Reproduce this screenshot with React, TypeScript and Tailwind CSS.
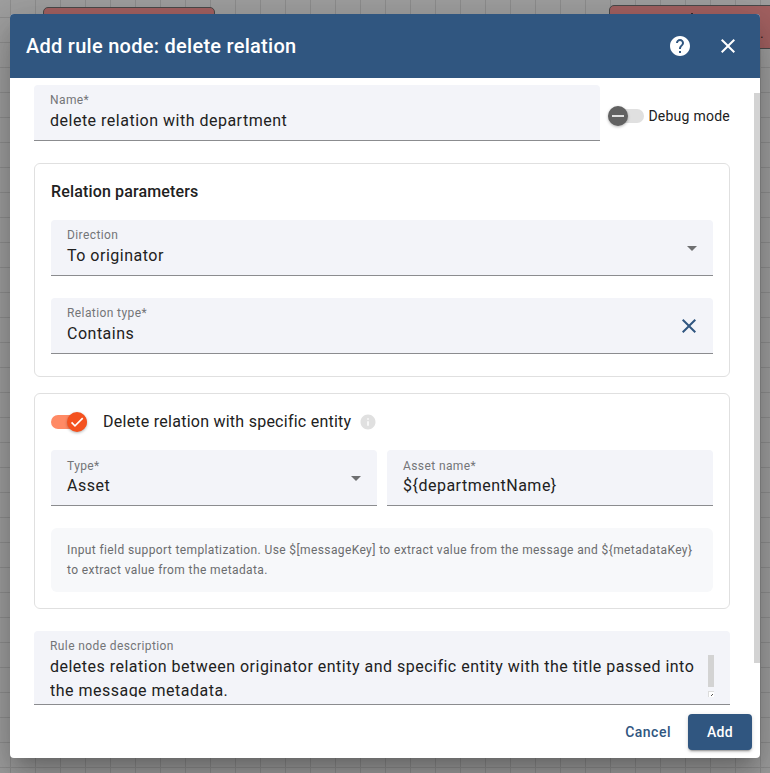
import type { ReactNode } from "react";

function Cross({ className }: { className: string }) {
  return (
    <svg viewBox="0 0 24 24" className={className} fill="currentColor">
      <path d="M19 6.41 17.59 5 12 10.59 6.41 5 5 6.41 10.59 12 5 17.59 6.41 19 12 13.41 17.59 19 19 17.59 13.41 12z" />
    </svg>
  );
}

function Caret() {
  return (
    <svg viewBox="0 0 10 5" className="h-[5px] w-[10px] text-[#6e6f71]" fill="currentColor">
      <path d="M0 0h10L5 5z" />
    </svg>
  );
}

interface FieldProps {
  label: string;
  value: string;
  children?: ReactNode;
  className?: string;
  labelClass?: string;
}

function Field({ label, value, children, className = "", labelClass = "pt-[7px] mb-px" }: FieldProps) {
  return (
    <div className={`flex h-14 justify-between rounded-t border-b border-[#8b8c8f] bg-[#f3f4f9] px-4 ${className}`}>
      <div>
        <div className={`text-xs leading-4 tracking-[0.4px] text-[#747578] ${labelClass}`}>{label}</div>
        <div className="text-base leading-6 tracking-[0.5px] text-[#212121]">{value}</div>
      </div>
      {children}
    </div>
  );
}

export default function App() {
  return (
    <div className="relative h-[773px] w-[770px] overflow-hidden bg-[#9f9f9f] bg-[linear-gradient(to_right,#8e8e8e_1px,transparent_1px),linear-gradient(to_bottom,#8e8e8e_1px,transparent_1px)] bg-[size:25px_25px] bg-[position:10px_17px] font-['Roboto',sans-serif]">
      <div className="absolute left-[43px] top-[7px] h-[42px] w-[172px] rounded-[5px] border border-[#4a4a4a] bg-[#a36161]" />
      <div className="absolute left-[609px] top-[5px] h-[44px] w-[172px] rounded-[5px] border border-[#4a4a4a] bg-[#a36161]">
        <span className="absolute left-[81px] top-[7px] h-1 w-[2px] bg-[#3b2929]" />
        <span className="absolute left-[144px] top-[20px] text-xs text-[#231515]">...</span>
      </div>

      <div className="absolute left-[10px] top-[14px] flex h-[744px] w-[750px] flex-col overflow-hidden rounded bg-white shadow-[0_11px_15px_-7px_rgba(0,0,0,0.2),0_24px_38px_3px_rgba(0,0,0,0.14),0_9px_46px_8px_rgba(0,0,0,0.12)]">
        <header className="flex h-16 shrink-0 items-center bg-[#305680] pl-4 pr-5 text-white">
          <h1 className="flex-1 text-xl font-medium tracking-[0.27px]">Add rule node: delete relation</h1>
          <svg viewBox="0 0 24 24" className="mr-6 h-6 w-6" fill="currentColor">
            <path d="M12 2C6.48 2 2 6.48 2 12s4.480 10 10 10 10-4.480 10-10S17.520 2 12 2zm1 17h-2v-2h2v2zm2.070-7.750-.9.920C13.450 12.900 13 13.500 13 15h-2v-.5c0-1.100.45-2.100 1.170-2.830l1.240-1.260c.370-.360.590-.860.590-1.410 0-1.100-.9-2-2-2s-2 .9-2 2H8c0-2.210 1.790-4 4-4s4 1.790 4 4c0 .880-.360 1.680-.930 2.250z" />
          </svg>
          <Cross className="h-6 w-6" />
        </header>

        <main className="flex h-[627px] shrink-0">
          <div className="w-[744px] pl-6 pr-6 pt-[7px]">
            <div className="flex">
              <Field label="Name*" value="delete relation with department" className="w-[566px]" />
              <div className="ml-2 flex h-[62px] items-center">
                <div className="relative h-[14px] w-9 rounded-full bg-[#e0e0e0]">
                  <span className="absolute -top-[3px] left-0 flex h-5 w-5 items-center justify-center rounded-full bg-[#616161] shadow-[0_1px_3px_rgba(0,0,0,0.3)]">
                    <span className="h-[2px] w-3 bg-[#e0e0e0]" />
                  </span>
                </div>
                <span className="ml-[4.5px] whitespace-nowrap text-sm leading-5 tracking-[0.25px] text-[#212121]">Debug mode</span>
              </div>
            </div>

            <section className="mt-4 h-[214px] w-[696px] rounded-md border border-[#e0e0e0] px-4">
              <h2 className="mt-4 text-base font-medium leading-6 tracking-[0.15px] text-[#212121]">Relation parameters</h2>
              <Field label="Direction" value="To originator" className="mt-4">
                <div className="flex pt-[26px]"><Caret /></div>
              </Field>
              <Field label="Relation type*" value="Contains" className="mt-[22px]">
                <Cross className="-mr-1 mt-4 h-6 w-6 text-[#305680]" />
              </Field>
            </section>

            <section className="mt-4 h-[216px] w-[696px] rounded-md border border-[#e0e0e0] px-4">
              <div className="mt-4 flex h-6 items-center">
                <div className="relative h-[14px] w-9 rounded-full bg-[#ff8a65]">
                  <span className="absolute -top-[3px] right-0 flex h-5 w-5 items-center justify-center rounded-full bg-[#f4511e] shadow-[0_1px_3px_rgba(0,0,0,0.3)]">
                    <svg viewBox="0 0 24 24" className="h-4 w-4" fill="white">
                      <path d="M19.690 5.230 8.960 15.960l-4.230-4.230L2.960 13.500l6 6L21.460 7z" />
                    </svg>
                  </span>
                </div>
                <span className="ml-4 text-base leading-6 tracking-[0.25px] text-[#212121]">Delete relation with specific entity</span>
                <svg viewBox="0 0 24 24" className="ml-2 h-[18px] w-[18px] text-[#e0e0e0]" fill="currentColor">
                  <path d="M12 2C6.480 2 2 6.480 2 12s4.480 10 10 10 10-4.480 10-10S17.520 2 12 2zm1 15h-2v-6h2v6zm0-8h-2V7h2v2z" />
                </svg>
              </div>
              <div className="mt-4 flex gap-[10px]">
                <Field label="Type*" value="Asset" className="flex-1" labelClass="pt-2">
                  <div className="flex pt-[26px]"><Caret /></div>
                </Field>
                <Field label="Asset name*" value="${departmentName}" className="flex-1" labelClass="pt-2" />
              </div>
              <p className="mt-[22px] h-16 rounded-md bg-[#f7f8fa] px-4 py-3 text-xs leading-5 tracking-[0.39px] text-[#6b6c6e]">
                Input field support templatization. Use $[messageKey] to extract value from the message and ${"{metadataKey}"} to extract value from the metadata.
              </p>
            </section>

            <div className="mt-[22px] h-[74px] w-[696px] rounded-t border-b border-[#8b8c8f] bg-[#f3f4f9] px-4 pt-[7px]">
              <div className="text-xs leading-4 tracking-[0.4px] text-[#747578]">Rule node description</div>
              <div className="flex h-[43px] justify-between overflow-hidden">
                <p className="w-[650px] shrink-0 pt-px text-base leading-6 tracking-[0.49px] text-[#212121]">
                  deletes relation between originator entity and specific entity with the title passed into the message metadata.
                </p>
                <div className="flex w-[6px] shrink-0 flex-col justify-between pt-px">
                  <span className="h-8 bg-[#d3d3d3]" />
                  <svg viewBox="0 0 6 6" className="h-[6px] w-[6px]">
                    <path d="M0 0h6v6H0z" fill="#dcdcdc" />
                    <path d="M1 1h5v5H1z" fill="white" />
                    <path d="M4 3h1v1H4zM3 4h1v1H3z" fill="#555" />
                  </svg>
                </div>
              </div>
            </div>
          </div>
          <div className="mt-[15px] h-[570px] w-[6px] bg-[#d3d3d3]" />
        </main>

        <footer className="flex flex-1 items-start justify-end pr-2 pt-[9px] text-sm font-medium">
          <button className="mr-px h-9 px-4 tracking-[0.5px] text-[#305680]">Cancel</button>
          <button className="h-9 w-16 rounded bg-[#305680] tracking-[0.35px] text-white shadow-[0_3px_1px_-2px_rgba(0,0,0,0.2),0_2px_2px_rgba(0,0,0,0.14),0_1px_5px_rgba(0,0,0,0.12)]">Add</button>
        </footer>
      </div>
    </div>
  );
}
